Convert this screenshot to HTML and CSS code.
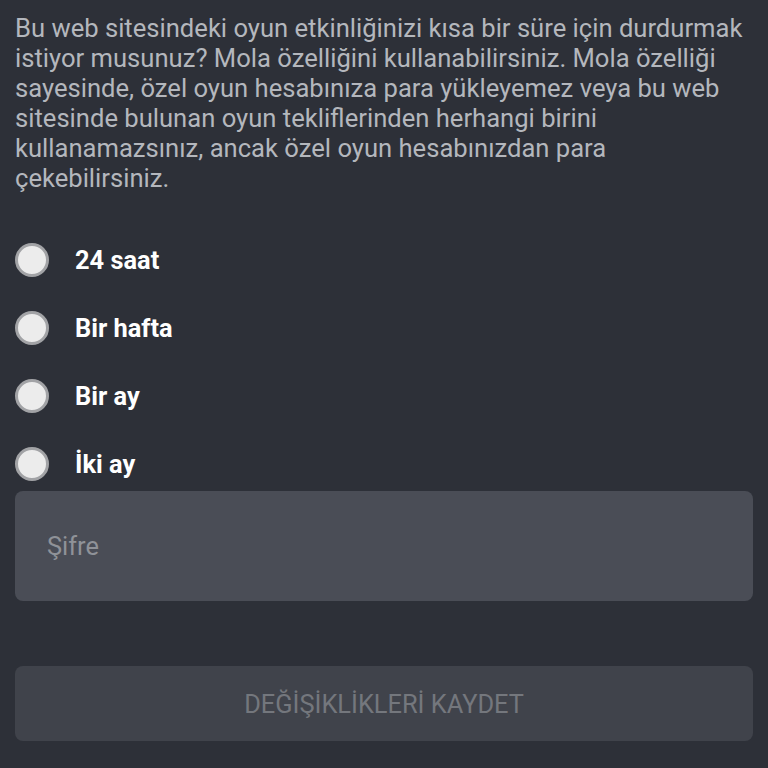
FILE: index.html
```html
<!DOCTYPE html>
<html lang="tr">
<head>
<meta charset="utf-8">
<link rel="stylesheet" href="styles.css">
</head>
<body>
<div class="page">
  <p class="intro">Bu web sitesindeki oyun etkinliğinizi kısa bir süre için durdurmak istiyor musunuz? Mola özelliğini kullanabilirsiniz. Mola özelliği sayesinde, özel oyun hesabınıza para yükleyemez veya bu web sitesinde bulunan oyun tekliflerinden herhangi birini kullanamazsınız, ancak özel oyun hesabınızdan para çekebilirsiniz.</p>
  <div class="options">
    <label class="option"><span class="radio"></span><span class="label">24 saat</span></label>
    <label class="option"><span class="radio"></span><span class="label">Bir hafta</span></label>
    <label class="option"><span class="radio"></span><span class="label">Bir ay</span></label>
    <label class="option"><span class="radio"></span><span class="label">İki ay</span></label>
  </div>
  <div class="field"><span class="placeholder">Şifre</span></div>
  <div class="button">DEĞİŞİKLİKLERİ KAYDET</div>
</div>
</body>
</html>
```
FILE: styles.css
```css
html, body {
  margin: 0;
  padding: 0;
  background: #2d3038;
}
body {
  font-family: Roboto, "Noto Sans", sans-serif;
}
.page {
  padding: 13px 15px 0 15px;
  display: flex;
  flex-direction: column;
}
.intro {
  margin: 0;
  color: #b4b7bd;
  font-size: 25.6px;
  line-height: 30px;
}
.options {
  margin-top: 50px;
  display: flex;
  flex-direction: column;
  gap: 34px;
}
.option {
  display: flex;
  align-items: center;
  height: 34px;
}
.radio {
  box-sizing: border-box;
  width: 34px;
  height: 34px;
  border-radius: 50%;
  border: 3px solid #a2a3a6;
  background: #ececec;
  flex: none;
}
.label {
  margin-left: 26px;
  color: #ffffff;
  font-weight: 700;
  font-size: 25.4px;
}
.field {
  margin-top: 10px;
  height: 110px;
  background: #4a4d56;
  border-radius: 8px;
  display: flex;
  align-items: center;
  padding-left: 32px;
}
.placeholder {
  color: #8f9298;
  font-size: 25.4px;
}
.button {
  margin-top: 65px;
  height: 75px;
  background: #40434b;
  border-radius: 8px;
  display: flex;
  align-items: center;
  justify-content: center;
  color: #74777d;
  font-size: 25.4px;
}
```
